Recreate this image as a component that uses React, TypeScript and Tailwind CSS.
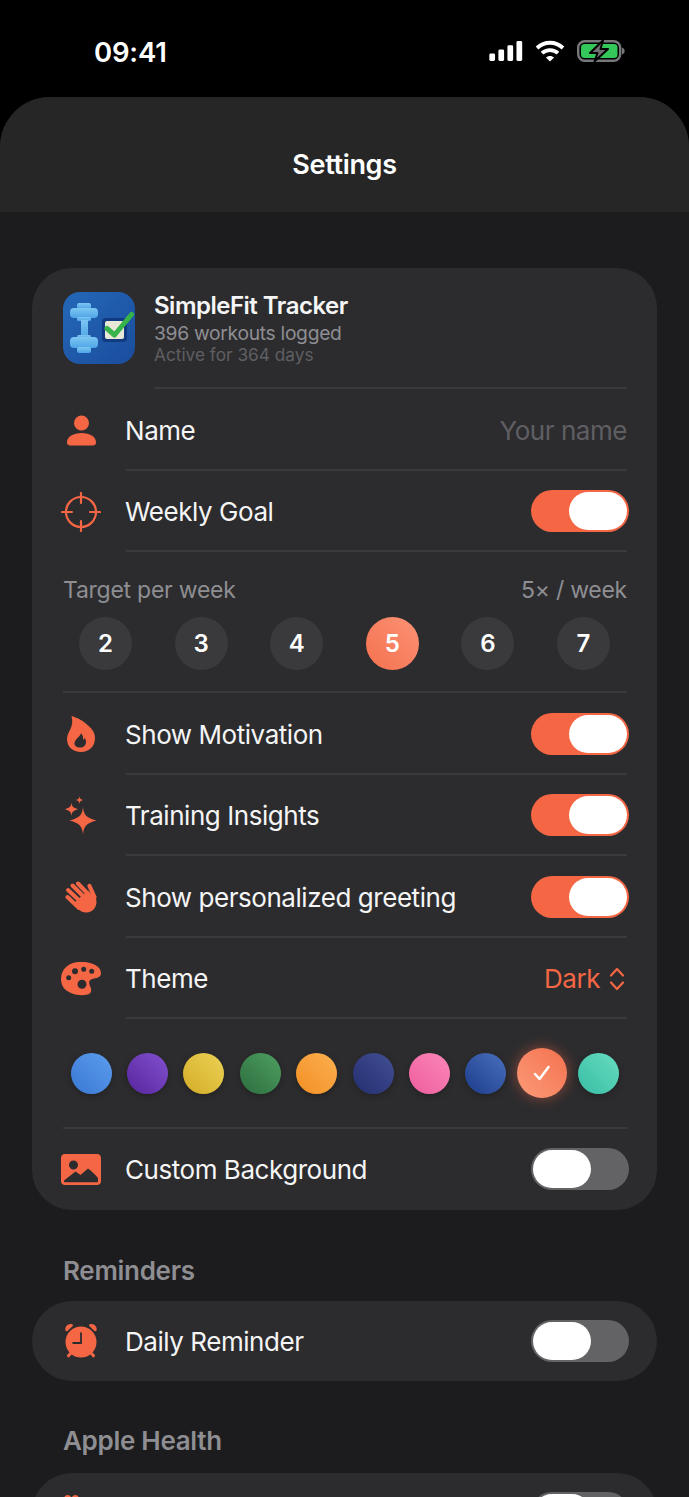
import type { ReactNode } from "react";

const accent = "#f56645";
const font = { fontFamily: "Inter, 'Noto Sans', sans-serif" };

const swatches = [
  "from-[#3a78d4] to-[#5c9ded]",
  "from-[#57259c] to-[#8250cf]",
  "from-[#d4ac25] to-[#ecd254]",
  "from-[#2c6e3f] to-[#4f9f62]",
  "from-[#f38f20] to-[#fab04f]",
  "from-[#242f70] to-[#434f94]",
  "from-[#ee5c9e] to-[#fb87b8]",
  "from-[#1d3c8c] to-[#4a70bd]",
  "from-[#f4714f] to-[#fb9a78]",
  "from-[#36bda4] to-[#66dcc0]",
];

// ── Small SF-style glyphs ────────────────────────────────────────────────────
function SignalIcon() {
  return (
    <svg width="34" height="20" viewBox="0 0 35 21" fill="white">
      <rect x="0" y="13" width="6" height="8" rx="1.5" />
      <rect x="9.5" y="9" width="6" height="12" rx="1.5" />
      <rect x="19" y="4.5" width="6" height="16.5" rx="1.5" />
      <rect x="28.5" y="0" width="6" height="21" rx="1.5" />
    </svg>
  );
}

function WifiIcon() {
  return (
    <svg width="30" height="22" viewBox="0 0 30 22" fill="none" stroke="white" strokeWidth="3.8">
      <path d="M2 8C9.5 1 20.5 1 28 8" />
      <path d="M7 13.2C11.5 9 18.5 9 23 13.2" />
      <path d="M15 21.5L10.9 17.6C13.2 15.4 16.8 15.4 19.1 17.6Z" fill="white" stroke="none" />
    </svg>
  );
}

function BatteryIcon() {
  return (
    <svg width="48" height="22" viewBox="0 0 48 22" fill="none">
      <rect x="1.2" y="1.2" width="42" height="19.6" rx="6.5" stroke="#77787a" strokeWidth="2.4" />
      <rect x="4" y="4" width="36.5" height="14" rx="3.5" fill="#34c759" />
      <path d="M45 7.5C47 8.2 47.6 9.5 47.6 11C47.6 12.5 47 13.8 45 14.5Z" fill="#77787a" />
      <path d="M26 0.5L13 13H20.5L17.5 21.5L31 9H23.5Z" fill="#6e6f70" stroke="black" strokeWidth="2" strokeLinejoin="round" />
    </svg>
  );
}

function PersonIcon() {
  return (
    <svg width="29" height="31" viewBox="0 0 29 31" fill={accent}>
      <circle cx="14.5" cy="8" r="7.5" />
      <path d="M0 27.5C0 21.5 6.5 18 14.5 18C22.5 18 29 21.5 29 27.5C29 29.6 27.7 30.5 25.8 30.5H3.2C1.3 30.5 0 29.6 0 27.5Z" />
    </svg>
  );
}

function TargetIcon() {
  return (
    <svg width="40" height="40" viewBox="0 0 40 40" fill="none" stroke={accent} strokeWidth="2.2" strokeLinecap="round">
      <circle cx="20" cy="20" r="15" />
      <path d="M20 1V11M20 29V39M1 20H11M29 20H39" />
    </svg>
  );
}

function FlameIcon() {
  return (
    <svg width="28" height="36" viewBox="0 0 28 36" fill={accent}>
      <path
        fillRule="evenodd"
        d="M4.5 0C11 2 16 4.5 21 9.5C25.5 13 28 17 28 22C28 30.5 22 36 14 36C6 36 0 31 0 23C0 19 2 16 3.5 13C5 9.5 6 5 4.5 0ZM14 17C14 20 7.5 23 7.5 27.5C7.5 30 10 31.5 13 31.5C16.5 31.5 19 29.5 19 26C19 24.5 18.5 23 17.5 22C17.2 23 16.8 23.5 16 24C16.5 21 15.5 19 14 17Z"
      />
    </svg>
  );
}

function SparklesIcon() {
  return (
    <svg width="32" height="40" viewBox="0 0 32 40" fill={accent}>
      <path d="M18 11C18.8 19 21 21.5 31.5 24.5C21 27.5 18.8 30 18 38.5C17.2 30 15 27.5 4.5 24.5C15 21.5 17.2 19 18 11Z" />
      <path d="M6.5 6.5C6.9 10.5 8 11.6 13 13.2C8 14.8 6.9 15.9 6.5 20C6.1 15.9 5 14.8 0 13.2C5 11.6 6.1 10.5 6.5 6.5Z" />
      <path d="M14.5 0C14.8 2.6 15.4 3.2 18.5 4C15.4 4.8 14.8 5.4 14.5 8C14.2 5.4 13.6 4.8 10.5 4C13.6 3.2 14.2 2.6 14.5 0Z" />
    </svg>
  );
}

function WaveIcon() {
  return (
    <svg width="32" height="32" viewBox="0 0 32 32" fill={accent} stroke={accent} strokeLinecap="round">
      <g fill="none" strokeWidth="4">
        <path d="M2.5 16L14 27" />
        <path d="M3 9L17 22" />
        <path d="M7.5 4.5L20 17" />
        <path d="M13 2.5L23 13" />
        <path d="M24.5 5L29.5 16" strokeWidth="4.2" />
      </g>
      <path stroke="none" d="M10 21L23 9.5C25 12 27 14 29.5 14C31.5 18 32.5 22 30 26.5C27.5 31 21.5 33 16.5 30.5C13.5 29 12 25 10 21Z" />
    </svg>
  );
}

function PaletteIcon() {
  return (
    <svg width="40" height="34" viewBox="0 0 40 34" fill={accent}>
      <path
        fillRule="evenodd"
        d="M17 0C28 -1 40 3 40 11C40 16 35 16 31 17C28 18 27.5 21 29 24C30.5 27 31 30 28 32C24 34 14 33.5 8 30C2 27 0 22 0 17C0 7 8 0.5 17 0ZM7.7 13.2A2.5 2.5 0 1 0 7.7 18.2A2.5 2.5 0 1 0 7.7 13.2ZM14 6.3A3 3 0 1 0 14 12.3A3 3 0 1 0 14 6.3ZM22.7 4.8A2.5 2.5 0 1 0 22.7 9.8A2.5 2.5 0 1 0 22.7 4.8ZM30.7 6.8A2.5 2.5 0 1 0 30.7 11.8A2.5 2.5 0 1 0 30.7 6.8ZM21 17.8A4.5 4.5 0 1 0 21 26.8A4.5 4.5 0 1 0 21 17.8Z"
      />
    </svg>
  );
}

function PhotoIcon() {
  return (
    <svg width="40" height="31" viewBox="0 0 40 31" fill={accent}>
      <path
        fillRule="evenodd"
        d="M4 0H36C38.4 0 40 1.6 40 4V27C40 29.4 38.4 31 36 31H4C1.6 31 0 29.4 0 27V4C0 1.6 1.6 0 4 0ZM12.5 6.5A4.5 4.5 0 1 0 12.5 15.5A4.5 4.5 0 1 0 12.5 6.5ZM27 14.5L19.5 21L14.5 17.5L3 26.5V27.5C3 28 3.4 28.3 4 28.3H36C36.6 28.3 37 28 37 27.5V24C33.5 20 30 16.5 27 14.5Z"
      />
    </svg>
  );
}

function AlarmIcon() {
  return (
    <svg width="34" height="36" viewBox="0 0 34 36" fill={accent}>
      <path d="M1.5 7.5C0.5 4 3.5 0.5 7.5 1C8.8 1.2 9.5 2.4 8.5 3.3L3.5 7.9C2.8 8.5 1.8 8.4 1.5 7.5Z" />
      <path d="M32.5 7.5C33.5 4 30.5 0.5 26.5 1C25.2 1.2 24.5 2.4 25.5 3.3L30.5 7.9C31.2 8.5 32.2 8.4 32.5 7.5Z" />
      <path d="M3 32L6.5 28.5L8.5 30.5L5 34.5C4 35 2.5 33 3 32ZM31 32L27.5 28.5L25.5 30.5L29 34.5C30 35 31.5 33 31 32Z" />
      <circle cx="17" cy="19" r="15.5" />
      <path d="M17 9.5V20H8.5" fill="none" stroke="#2c2c2e" strokeWidth="1.8" />
    </svg>
  );
}

// only the tops of the two lobes show above the fold
function HeartIcon() {
  return (
    <svg width="36" height="38" viewBox="0 0 36 38" fill={accent}>
      <path d="M9 24C3 18 0 13 0 7C0 3 2 0 4.5 0C6.5 0 8 1.5 8.5 3C9 1.5 10.5 0 12.5 0C15 0 17 3 17 7C17 13 14 18 9 24Z" />
    </svg>
  );
}

function AppLogo() {
  return (
    <svg width="72" height="72" viewBox="0 0 72 72" className="block flex-none">
      <defs>
        <linearGradient id="tile" x1="0" y1="0" x2="1" y2="1">
          <stop offset="0" stopColor="#2468b8" />
          <stop offset="1" stopColor="#1b4c9c" />
        </linearGradient>
        <linearGradient id="bell" x1="0" y1="0" x2="0" y2="1">
          <stop offset="0" stopColor="#7cc6f2" />
          <stop offset="1" stopColor="#4fa5e6" />
        </linearGradient>
      </defs>
      <rect width="72" height="72" rx="17" fill="url(#tile)" />
      <g fill="url(#bell)">
        <rect x="14" y="11" width="14" height="6" rx="2" />
        <rect x="7" y="16" width="28" height="10" rx="4" />
        <rect x="14" y="25" width="14" height="4" rx="1.5" />
        <rect x="18" y="28" width="7" height="18" />
        <rect x="14" y="43" width="14" height="4" rx="1.5" />
        <rect x="7" y="45" width="28" height="11" rx="4" />
        <rect x="14" y="55" width="14" height="6" rx="2" />
      </g>
      <rect x="39" y="26" width="25" height="24" rx="4" fill="#123a80" />
      <rect x="42" y="29" width="19" height="18" rx="2" fill="#e8e8d8" />
      <path d="M44 36.500L51.500 43L68.500 22.500" fill="none" stroke="#36b34a" strokeWidth="5" strokeLinecap="round" strokeLinejoin="round" />
    </svg>
  );
}

function Toggle({ on }: { on: boolean }) {
  return (
    <div className={"-mr-[2px] flex h-[42px] w-[98px] flex-none items-center rounded-full px-[2px] " + (on ? "justify-end bg-[#f56645]" : "justify-start bg-[#636366]")}>
      <div className="h-[38px] w-[58px] rounded-full bg-white" />
    </div>
  );
}

// icon slot + label + right side, with the divider only under the text part
function Row({ icon, label, right, last }: { icon: ReactNode; label?: string; right?: ReactNode; last?: boolean }) {
  return (
    <div className="flex items-center">
      <div className="mt-[1px] flex w-[36px] flex-none items-center justify-center [&>svg]:flex-none">{icon}</div>
      <div className={"ml-[27px] flex flex-1 items-center justify-between " + (last ? "h-[80.5px]" : "h-[81.5px] border-b-2 border-[#3a3a3c] pt-[2px]")}>
        <span className="-ml-[1px] pt-[1px] text-[26px] tracking-[-0.45px] text-[#f5f5f6]">{label}</span>
        {right}
      </div>
    </div>
  );
}

function StatusBar() {
  return (
    <div className="flex h-[97px] items-center justify-between pt-[4px] pr-[64px] pl-[94px]">
      <span className="pt-[4px] text-[27.5px] leading-none font-semibold tracking-[-0.2px] text-white">09:41</span>
      <div className="flex items-center gap-[12px]">
        <SignalIcon />
        <WifiIcon />
        <BatteryIcon />
      </div>
    </div>
  );
}

export default function App() {
  return (
    <div style={font} className="h-[1497px] w-[689px] overflow-hidden bg-black">
      <StatusBar />

      <div className="h-[1400px] rounded-t-[50px] bg-[#1c1c1e]">
        <div className="flex h-[115px] items-center justify-center rounded-t-[50px] bg-[#262626] pt-[21px]">
          <h1 className="text-[27px] font-semibold tracking-[-0.35px] text-white">Settings</h1>
        </div>

        <div className="px-[32px] pt-[56px]">
          <div className="rounded-[40px] bg-[#2c2c2e] pr-[30px] pl-[31px]">
            <div className="flex h-[121px] items-start gap-[19px] pt-[24px]">
              <AppLogo />
              <div className="flex h-[97px] flex-1 flex-col border-b-2 border-[#3a3a3c]">
                <span className="text-[24px] leading-[28px] font-semibold tracking-[-0.5px] text-[#f5f5f6]">SimpleFit Tracker</span>
                <span className="text-[19.25px] leading-[26px] tracking-[-0.3px] text-[#8e8e93]">396 workouts logged</span>
                <span className="pt-[2px] text-[17.25px] leading-[14px] text-[#5f5f63]">Active for 364 days</span>
              </div>
            </div>

            <Row icon={<PersonIcon />} label="Name" right={<span className="pt-[1px] text-[26px] tracking-[-0.45px] text-[#5f5f63]">Your name</span>} />
            <Row icon={<TargetIcon />} label="Weekly Goal" right={<Toggle on />} />

            <div className="h-[141px] border-b-2 border-[#3a3a3c] pt-[22px]">
              <div className="flex justify-between text-[23px] leading-[32px] tracking-[-0.25px] text-[#8e8e93]">
                <span>Target per week</span>
                <span>5× / week</span>
              </div>
              <div className="mt-[11px] flex justify-between pr-[17px] pl-[16px]">
                {[2, 3, 4, 5, 6, 7].map((n) => (
                  <div
                    key={n}
                    className={"flex h-[53px] w-[53px] items-center justify-center rounded-full text-[24px] font-semibold text-white " +
                      (n === 5 ? "bg-gradient-to-tr from-[#f4714f] to-[#fb9274]" : "bg-[#3a3a3c]")}
                  >
                    {n}
                  </div>
                ))}
              </div>
            </div>

            <Row icon={<FlameIcon />} label="Show Motivation" right={<Toggle on />} />
            <Row icon={<SparklesIcon />} label="Training Insights" right={<Toggle on />} />
            <Row icon={<WaveIcon />} label="Show personalized greeting" right={<Toggle on />} />
            <Row
              icon={<PaletteIcon />}
              label="Theme"
              right={
                <span className="flex items-center gap-[9px] pt-[1px] pr-[2px] text-[26px] tracking-[-0.45px] text-[#f56645]">
                  Dark
                  <svg width="16" height="24" viewBox="0 0 16 24" fill="none" stroke={accent} strokeWidth="2.2" strokeLinecap="round" strokeLinejoin="round">
                    <path d="M2 8.5L8 2L14 8.5M2 15.5L8 22L14 15.5" />
                  </svg>
                </span>
              }
            />

            <div className="grid h-[110px] grid-cols-10 items-center border-b-2 border-[#3a3a3c]">
              {swatches.map((c, i) => (
                <div key={c} className="flex justify-center">
                  {i === 8 ? (
                    <div className={"flex h-[50px] w-[50px] items-center justify-center rounded-full bg-gradient-to-bl shadow-[0_0_14px_rgba(245,102,69,0.5)] " + c}>
                      <svg width="18" height="16" viewBox="0 0 18 16" fill="none" stroke="white" strokeWidth="2.5" strokeLinecap="round" strokeLinejoin="round">
                        <path d="M2 9L6.5 14L15.5 2" />
                      </svg>
                    </div>
                  ) : (
                    <div className={"h-[41px] w-[41px] rounded-full bg-gradient-to-tr shadow-[0_2px_6px_rgba(0,0,0,0.25)] " + c} />
                  )}
                </div>
              ))}
            </div>

            <Row icon={<PhotoIcon />} label="Custom Background" right={<Toggle on={false} />} last />
          </div>

          <h2 className="mt-[42px] pl-[31px] text-[26px] leading-[38px] font-semibold tracking-[-0.3px] text-[#8e8e93]">Reminders</h2>
          <div className="mt-[11px] rounded-[40px] bg-[#2c2c2e] pr-[30px] pl-[31px]">
            <Row icon={<AlarmIcon />} label="Daily Reminder" right={<Toggle on={false} />} last />
          </div>

          <h2 className="mt-[41px] pl-[31px] text-[26px] leading-[38px] font-semibold tracking-[-0.3px] text-[#8e8e93]">Apple Health</h2>
          <div className="mt-[13px] rounded-[40px] bg-[#2c2c2e] pr-[30px] pl-[31px]">
            <Row icon={<HeartIcon />} right={<Toggle on={false} />} last />
          </div>
        </div>
      </div>
    </div>
  );
}
